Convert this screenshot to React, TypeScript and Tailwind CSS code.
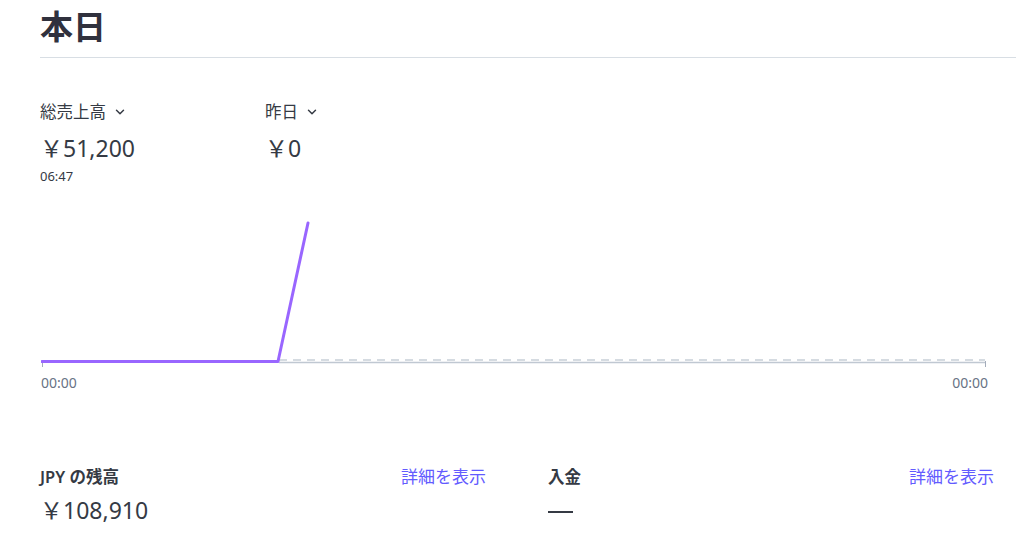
import { ChevronDown } from 'lucide-react';

const font = { fontFamily: '"Noto Sans", "Noto Sans CJK JP", sans-serif' };

function Metric({ label, value, time }: { label: string; value: string; time?: string }) {
  return (
    <div className="w-[225px]">
      <button className="flex items-center gap-[7px] text-[16.5px] leading-[20px] text-[#353a44]">
        {label}
        <ChevronDown className="w-[14px] h-[14px]" strokeWidth={2.5} />
      </button>
      <div className="mt-[12px] text-[23px] leading-[28px] text-[#353a44]">{value}</div>
      {time && <div className="mt-[6px] text-[13px] leading-[16px] text-[#353a44]">{time}</div>}
    </div>
  );
}

function Chart() {
  return (
    <div className="w-[947px] ml-[1px]">
      <svg width="947" height="170" viewBox="0 0 947 170" className="block">
        <line x1="238" y1="157" x2="944" y2="157" stroke="#d5dbe1" strokeWidth="2" strokeDasharray="8 6" />
        <line x1="238" y1="159.5" x2="945" y2="159.5" stroke="#c0c8d2" strokeWidth="1.5" />
        <line x1="1.5" y1="158" x2="1.5" y2="164" stroke="#a3acba" strokeWidth="1" />
        <line x1="944.5" y1="158" x2="944.5" y2="164" stroke="#a3acba" strokeWidth="1" />
        <polyline
          points="1,158.5 237,158.5 267,20"
          fill="none"
          stroke="#9966ff"
          strokeWidth="3"
          strokeLinejoin="round"
          strokeLinecap="round"
        />
      </svg>
      <div className="flex justify-between mt-[1px] text-[14px] leading-[18px] text-[#687385]">
        <span>00:00</span>
        <span>00:00</span>
      </div>
    </div>
  );
}

function Summary({ label, value, dash }: { label: string; value?: string; dash?: boolean }) {
  return (
    <div className="w-[446px]">
      <div className="flex items-center justify-between">
        <span className="text-[16.5px] leading-[20px] font-semibold text-[#353a44]">{label}</span>
        <a className="text-[17px] leading-[20px] text-[#635bff] cursor-pointer">詳細を表示</a>
      </div>
      {dash ? (
        <div className="mt-[11px] h-[28px] flex items-center">
          <div className="w-[25px] h-[1.5px] bg-[#353a44]" />
        </div>
      ) : (
        <div className="mt-[9px] text-[23px] leading-[28px] text-[#353a44]">{value}</div>
      )}
    </div>
  );
}

export default function App() {
  return (
    <div className="min-h-screen bg-white pl-[40px]" style={font}>
      <div className="border-b border-[#d8dee4] pb-[8px] pt-[5px]">
        <h1 className="text-[33px] leading-[44px] font-bold text-[#30313d]">本日</h1>
      </div>

      <div className="flex mt-[44px]">
        <Metric label="総売上高" value="￥51,200" time="06:47" />
        <Metric label="昨日" value="￥0" />
      </div>

      <div className="mt-[19px]">
        <Chart />
      </div>

      <div className="flex gap-[62px] mt-[75px]">
        <Summary label="JPY の残高" value="￥108,910" />
        <Summary label="入金" dash />
      </div>
    </div>
  );
}
